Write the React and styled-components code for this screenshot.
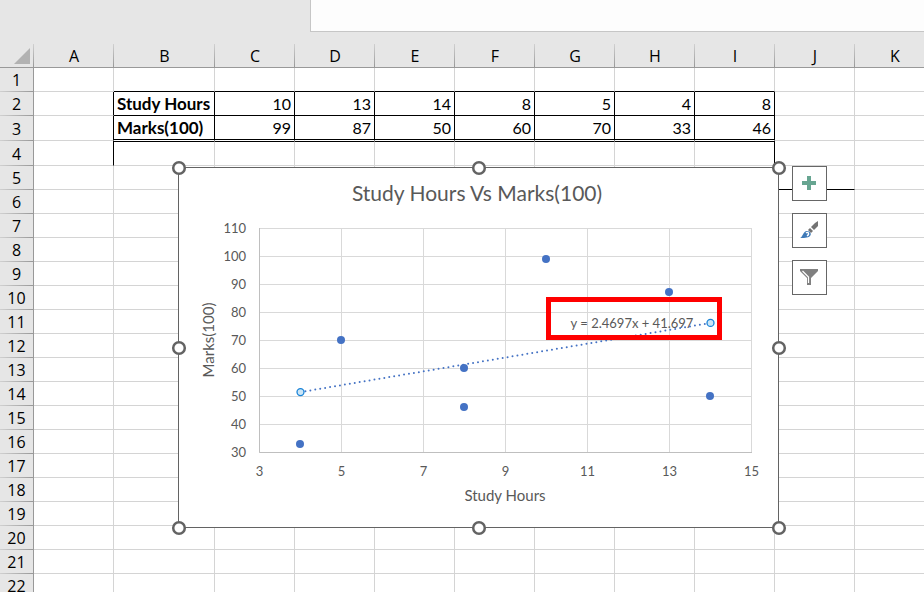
import React from "react";
import styled, { createGlobalStyle, css } from "styled-components";

const GlobalStyle = createGlobalStyle`
  body {
    margin: 0;
    background: #e6e6e6;
    overflow: hidden;
  }
  * {
    box-sizing: border-box;
  }
`;

const Workbook = styled.main`
  height: 100vh;
  overflow: hidden;
  background: #e6e6e6;
  color: #000;
  font-family: Lato, sans-serif;
`;

const FormulaBar = styled.div`
  display: flex;
  padding: 0 0 12px 310px;
`;

const FormulaInput = styled.input`
  flex: 1;
  height: 32px;
  padding: 0 8px;
  border: 0;
  border-left: 1px solid #c6c6c6;
  border-bottom: 1px solid #c6c6c6;
  background: #fdfdfd;
  font: 16px Lato, sans-serif;
  outline: none;
`;

const Sheet = styled.div`
  position: relative;
`;

const Grid = styled.table`
  table-layout: fixed;
  width: 935px;
  border-collapse: separate;
  border-spacing: 0;
  background: #fff;
`;

const Col = styled.col`
  width: ${(props) => props.$width}px;
`;

const Row = styled.tr`
  height: ${(props) => (props.$tall ? 25 : 24)}px;
`;

const headerText = css`
  padding: 0;
  background-color: #e6e6e6;
  font-family: "Open Sans", "Noto Sans", sans-serif;
  font-size: 16px;
  line-height: 20px;
  font-weight: normal;
  text-align: center;
`;

const ColumnHeader = styled.th`
  ${headerText}
  border-bottom: 1px solid #999;
  background-image: linear-gradient(#d0d0d0, #999);
  background-size: 1px 100%;
  background-position: right;
  background-repeat: no-repeat;
`;

const RowHeader = styled.th`
  ${headerText}
  border-right: 1px solid #999;
  background-image: linear-gradient(to right, #d0d0d0, #999);
  background-size: 100% 1px;
  background-position: bottom;
  background-repeat: no-repeat;
`;

const SelectAll = styled(ColumnHeader)`
  vertical-align: bottom;
  text-align: right;
`;

const SelectButton = styled.button`
  display: block;
  width: 16px;
  height: 16px;
  margin: 0 4px 3px auto;
  padding: 0;
  border: 0;
  background: #b2b2b2;
  clip-path: polygon(100% 0, 100% 100%, 0 100%);
`;

const Cell = styled.td`
  padding: 0 3px;
  border-right: 1px solid #d4d4d4;
  border-bottom: 1px solid #d4d4d4;
  font-size: ${(props) => (props.$label ? 17 : 16)}px;
  line-height: 20px;
  text-align: ${(props) => (props.$label ? "left" : "right")};
  font-weight: ${(props) => (props.$label ? "bold" : "normal")};
  white-space: nowrap;
  ${(props) => props.$right && "border-right-color: #000;"}
  ${(props) => props.$bottom && "border-bottom-color: #000;"}
  ${(props) => props.$top && "border-top: 1px solid #000;"}
  ${(props) =>
    props.$double &&
    css`
      border-bottom-color: #fff;
      box-shadow: inset 0 -1px #000;
    `}
`;

const ChartObject = styled.section`
  position: absolute;
  top: 123px;
  left: 178px;
  display: flex;
  align-items: flex-start;
  gap: 13px;
`;

const ChartSvg = styled.svg`
  display: block;
  overflow: visible;
  font-family: Lato, sans-serif;
  fill: #595959;
`;

const ChartTitle = styled.text`
  font-size: 21px;
  text-anchor: middle;
`;

const AxisTitle = styled.text`
  font-size: 15px;
  text-anchor: middle;
`;

const Tick = styled.text`
  font-size: 13px;
  text-anchor: ${(props) => props.$anchor};
`;

const ChartTools = styled.div`
  display: flex;
  flex-direction: column;
  gap: 12px;
  margin-top: -1px;
`;

const ToolButton = styled.button`
  display: flex;
  align-items: center;
  justify-content: center;
  width: 35px;
  height: 35px;
  padding: 0;
  border: 1px solid #666;
  background: #fff;
`;

const columns = ["A", "B", "C", "D", "E", "F", "G", "H", "I", "J", "K"];
const hours = [10, 13, 14, 8, 5, 4, 8];
const marks = [99, 87, 50, 60, 70, 33, 46];
const values = {
  2: ["", "Study Hours", ...hours],
  3: ["", "Marks(100)", ...marks],
};
const rows = Array.from({ length: 22 }, (_, i) => i + 1);
const xTicks = [3, 5, 7, 9, 11, 13, 15];
const yTicks = [30, 40, 50, 60, 70, 80, 90, 100, 110];

const px = (x) => 81.5 + (x - 3) * 41;
const py = (y) => 285.5 - (y - 30) * 2.8;
const trend = (x) => 2.4697 * x + 41.697;

// borders of the data block B2:I4, plus the line under J5
const cellBorders = (row, col) => {
  const inBlock = col >= 1 && col <= 8;
  const edge = col === 0 || col === 8;
  return {
    $right:
      ((row === 2 || row === 3) && col <= 8) || (row === 4 && edge),
    $bottom:
      (inBlock && (row === 1 || row === 2)) || (row === 5 && col === 9),
    $top: inBlock && row === 4,
    $double: inBlock && row === 3,
  };
};

const SheetGrid = () => (
  <Grid>
    <colgroup>
      <Col $width={34} />
      {columns.map((name) => (
        <Col key={name} $width={name === "B" ? 101 : 80} />
      ))}
    </colgroup>
    <thead>
      <Row>
        <SelectAll>
          <SelectButton aria-label="Select all" />
        </SelectAll>
        {columns.map((name) => (
          <ColumnHeader key={name} scope="col">
            {name}
          </ColumnHeader>
        ))}
      </Row>
    </thead>
    <tbody>
      {rows.map((row) => (
        <Row key={row} $tall={row === 3 || row === 4}>
          <RowHeader scope="row">{row}</RowHeader>
          {columns.map((name, col) => (
            <Cell
              key={name}
              $label={name === "B"}
              {...cellBorders(row, col)}
            >
              {values[row] && values[row][col]}
            </Cell>
          ))}
        </Row>
      ))}
    </tbody>
  </Grid>
);

const Chart = () => (
  <ChartSvg width="601" height="361" role="img" aria-label="Scatter chart">
    <rect x="0.5" y="0.5" width="600" height="360" fill="#fff" stroke="#636363" />
    <ChartTitle x="299" y="34">
      Study Hours Vs Marks(100)
    </ChartTitle>
    <g stroke="#d9d9d9">
      {yTicks.map((y) => (
        <path key={y} d={`M81 ${Math.floor(py(y)) + 0.5}H574`} />
      ))}
      {xTicks.map((x) => (
        <path key={x} d={`M${px(x)} 61V286`} />
      ))}
    </g>
    <path d="M81.5 61V285.5H574" fill="none" stroke="#bfbfbf" />
    {yTicks.map((y) => (
      <Tick key={y} $anchor="end" x="68" y={Math.round(py(y)) + 4}>
        {y}
      </Tick>
    ))}
    {xTicks.map((x) => (
      <Tick key={x} $anchor="middle" x={px(x)} y="309">
        {x}
      </Tick>
    ))}
    <AxisTitle x="327" y="334">
      Study Hours
    </AxisTitle>
    <AxisTitle transform="translate(36 173) rotate(-90)">Marks(100)</AxisTitle>
    <Tick $anchor="middle" x="454" y="161">
      y = 2.4697x + 41.697
    </Tick>
    <path
      d={`M${px(4)} ${py(trend(4))}L${px(14)} ${py(trend(14))}`}
      stroke="#4472c4"
      strokeWidth="2"
      strokeLinecap="round"
      strokeDasharray="0 5"
    />
    {hours.map((x, i) => (
      <circle
        key={i}
        cx={Math.floor(px(x))}
        cy={Math.floor(py(marks[i]))}
        r="4"
        fill="#4472c4"
      />
    ))}
    {[4, 14].map((x) => (
      <circle
        key={x}
        cx={px(x)}
        cy={py(trend(x))}
        r="3.5"
        fill="#cce6f7"
        stroke="#1883d7"
        strokeWidth="1.3"
      />
    ))}
    <rect x="370.5" y="132.5" width="171" height="38" fill="none" stroke="#f00" strokeWidth="5" />
    {[0, 300, 600].map((x) =>
      [0, 180, 360]
        .filter((y) => x !== 300 || y !== 180)
        .map((y) => (
          <circle
            key={`${x}-${y}`}
            cx={x + 1}
            cy={y + 1}
            r="5.8"
            fill="#fff"
            stroke="#636363"
            strokeWidth="2.5"
          />
        ))
    )}
  </ChartSvg>
);

const PlusIcon = () => (
  <svg width="19" height="19" viewBox="0 0 19 19">
    <path d="M7 2h4v5h5v4h-5v5H7v-5H2V7h5z" fill="#67a591" />
  </svg>
);

const BrushIcon = () => (
  <svg width="19" height="19" viewBox="0 0 19 19">
    <path d="M18 0v5l-4 4-3-3 4-4z" fill="#737373" />
    <path d="M10 7l3 3-2 2-3-3z" fill="#737373" />
    <path d="M0 17c3-1 3-7 7-7 3 0 5 3 3 5-2 2-7 2-10 2z" fill="#3f7ab8" />
    <path d="M6 12c2-2 4 1 1 3" fill="none" stroke="#fff" strokeWidth="1.4" />
  </svg>
);

const FunnelIcon = () => (
  <svg width="19" height="19" viewBox="0 0 19 19">
    <path d="M0 1h18v2l-7 7v7H7v-7L0 3z" fill="#808080" />
    <path d="M2.500 3l6 6v6" fill="none" stroke="#fff" strokeWidth="1.2" />
  </svg>
);

const App = () => (
  <>
    <GlobalStyle />
    <Workbook>
      <FormulaBar>
        <FormulaInput aria-label="Formula bar" />
      </FormulaBar>
      <Sheet>
        <SheetGrid />
        <ChartObject>
          <Chart />
          <ChartTools>
            <ToolButton aria-label="Chart elements">
              <PlusIcon />
            </ToolButton>
            <ToolButton aria-label="Chart styles">
              <BrushIcon />
            </ToolButton>
            <ToolButton aria-label="Chart filters">
              <FunnelIcon />
            </ToolButton>
          </ChartTools>
        </ChartObject>
      </Sheet>
    </Workbook>
  </>
);

export default App;
